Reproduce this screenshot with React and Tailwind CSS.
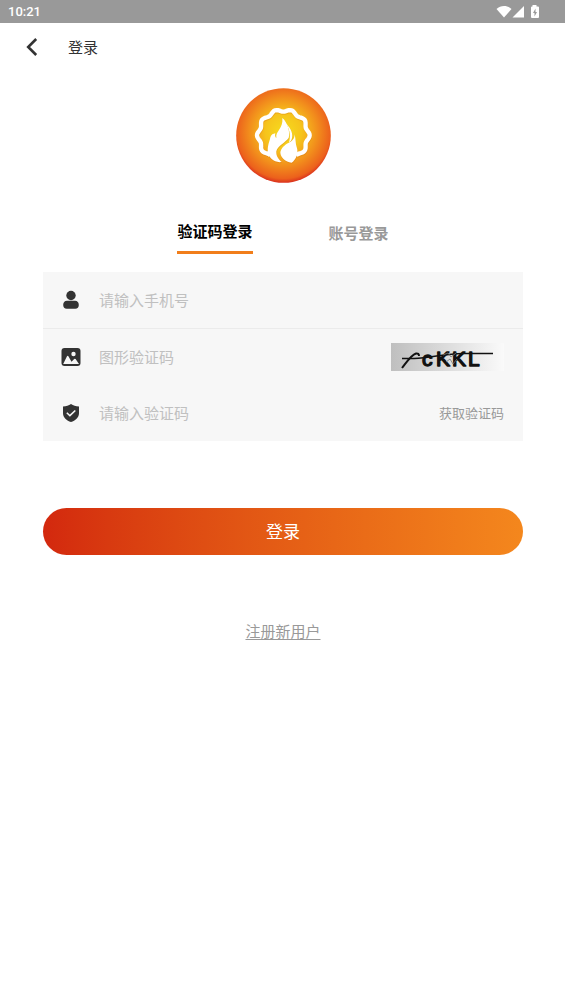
import React, { useState } from 'react';

const TABS = [
  { id: 'code', label: '验证码登录' },
  { id: 'account', label: '账号登录' }
];

// Ten-lobed ring, left open at the bottom where the flame sits
const ringPath = () => {
  const points = [];
  for (let deg = 123; deg <= 417; deg += 3) {
    const a = (deg * Math.PI) / 180;
    const r = 75 + 4 * Math.cos(10 * a);
    points.push(`${(157 + r * Math.cos(a)).toFixed(1)} ${(157 + r * Math.sin(a)).toFixed(1)}`);
  }
  return `M${points.join('L')}`;
};

const App = () => {
  const [tab, setTab] = useState('code');

  return (
    <div className="min-h-screen w-full bg-white font-['Noto_Sans','Noto_Sans_CJK_SC',sans-serif] text-[15px]">
      <StatusBar />

      {/* Header */}
      <header className="flex h-12 items-center pl-6">
        <button type="button" aria-label="返回" className="flex h-6 w-4 items-center justify-center">
          <svg viewBox="0 0 16 24" className="h-6 w-4" fill="none" stroke="#333" strokeWidth="2.6">
            <path d="M12.2 4 4.2 12l8 8" />
          </svg>
        </button>
        <h1 className="ml-7 leading-6 text-[#333]">登录</h1>
      </header>

      <main className="pl-[43px] pr-[42px] pt-[17px]">
        <Logo />

        {/* Login mode */}
        <div role="tablist" className="mt-9 flex justify-center gap-[76px]">
          {TABS.map((item) => (
            <button
              key={item.id}
              type="button"
              role="tab"
              aria-selected={tab === item.id}
              onClick={() => setTab(item.id)}
              className={
                tab === item.id
                  ? 'h-[35px] border-b-[3px] border-[#f17e1b] pb-2 font-bold leading-6 text-black'
                  : 'h-7 font-bold leading-6 text-[#999]'
              }
            >
              {item.label}
            </button>
          ))}
        </div>

        <form onSubmit={(e) => e.preventDefault()}>
          <div className="mt-[18px] bg-[#f7f7f7] pl-[18px] pr-[19px]">
            <Field id="phone" type="tel" placeholder="请输入手机号" icon={<UserIcon />} />
            <div className="-ml-[18px] -mr-[19px] h-px bg-[#ebebeb]" />
            <Field id="captcha" placeholder="图形验证码" icon={<ImageIcon />}>
              <button type="button" aria-label="刷新图形验证码">
                <Captcha />
              </button>
            </Field>
            <Field id="sms" placeholder="请输入验证码" icon={<ShieldIcon />}>
              <button type="button" className="text-[13px] leading-6 text-[#999]">获取验证码</button>
            </Field>
          </div>

          <button
            type="submit"
            className="mt-[67px] h-[47px] w-full rounded-full bg-linear-to-r from-[#d3280e] to-[#f4871d] text-[17px] text-white"
          >
            登录
          </button>
        </form>

        <div className="mt-16 text-center">
          <a href="#register" className="leading-6 text-[#999] underline underline-offset-2">注册新用户</a>
        </div>
      </main>
    </div>
  );
};

const StatusBar = () => (
  <div className="flex h-[23px] items-center justify-between bg-[#999] pl-2 pr-[25px] font-['Roboto'] text-[13px] text-white">
    <span className="font-medium">10:21</span>
    <svg viewBox="0 0 44 14" className="h-[14px] w-11" fill="#fff">
      <path d="M.5 4C4.600 0 11.400 0 15.500 4L8 12.500Z" />
      <path d="M28 1v11.500H16.500Z" />
      <path fillRule="evenodd" d="M36.500 0h4v1.500h1.500q1 0 1 1V12q0 1-1 1h-6q-1 0-1-1V2.500q0-1 1-1h.5ZM39.500 3.500 37 8h1.500V11.500L41 7h-1.500Z" />
    </svg>
  </div>
);

const Logo = () => (
  <svg viewBox="15 15 285 285" className="mx-auto size-[95px]" role="img" aria-label="logo">
    <defs>
      <radialGradient id="sun" cx="50%" cy="46%" r="55%">
        <stop offset="0" stopColor="#f6dc1e" />
        <stop offset=".35" stopColor="#f6c41c" />
        <stop offset=".65" stopColor="#f28f1c" />
        <stop offset=".9" stopColor="#ec611c" />
        <stop offset="1" stopColor="#d6261e" />
      </radialGradient>
    </defs>
    <circle cx="157.500" cy="157.500" r="142" fill="url(#sun)" />
    <g transform="translate(1 3)" fill="#c9660c" stroke="#c9660c" opacity=".25">
      <path d={ringPath()} fill="none" strokeWidth="13" />
      <Flame />
    </g>
    <path d={ringPath()} fill="none" stroke="#fff" strokeWidth="13" />
    <g fill="#fff">
      <Flame />
    </g>
  </svg>
);

const Flame = () => (
  <g strokeWidth="0">
    <path d="M154 105C170 118 178 148 173 165C164 178 140 188 136 205C135 219 142 229 152 237C130 240 113 225 111 208C108 190 116 176 118 163C121 155 126 152 133 151C131 160 134 164 136 165C133 143 157 139 154 105Z" />
    <path d="M166 122C180 137 188 153 182 169C180 174 177 177 174 179C179 162 178 144 166 122Z" />
    <path d="M191 154C195 170 193 181 197 192C204 211 195 230 182 239C163 236 149 224 148 209C149 197 160 186 172 180C184 175 191 167 191 154Z" />
  </g>
);

const Field = ({ id, icon, children, type = 'text', placeholder }) => (
  <div className="flex h-14 items-center">
    <label htmlFor={id} aria-label={placeholder} className="flex w-[38px] shrink-0">
      {icon}
    </label>
    <input
      id={id}
      type={type}
      placeholder={placeholder}
      className="h-full min-w-0 flex-1 bg-transparent text-[#333] outline-none placeholder:text-[#c0c0c0]"
    />
    {children}
  </div>
);

const UserIcon = () => (
  <svg viewBox="0 0 20 20" className="size-5" fill="#333">
    <circle cx="10" cy="5.500" r="4.700" />
    <path d="M6 10.800h8c2.500 0 3.800 2 3.800 4.200 0 2.200-1.300 3.700-3.500 3.700H5.700c-2.200 0-3.500-1.500-3.500-3.700C2.200 12.800 3.500 10.800 6 10.800Z" />
  </svg>
);

const ImageIcon = () => (
  <svg viewBox="0 0 20 20" className="size-5">
    <rect x=".5" y="1" width="19" height="18" rx="3" fill="#333" />
    <path d="M2.200 17 6 9.300q.7-1 1.400 0l3.100 5.400 2.700-2.600q.7-.6 1.400 0l3.400 4.900Z" fill="#f7f7f7" />
    <circle cx="12.500" cy="7" r="2.200" fill="#f7f7f7" />
  </svg>
);

const ShieldIcon = () => (
  <svg viewBox="0 0 20 20" className="size-5">
    <path d="M10 1c2.300 1.600 4.700 2.300 8 2.400v6.800c0 4.500-3.700 7.300-8 8.800-4.300-1.500-8-4.300-8-8.800V3.400C5.300 3.300 7.700 2.600 10 1Z" fill="#333" />
    <path d="m5.800 9.700 3.100 3 5.400-5.200" fill="none" stroke="#f7f7f7" strokeWidth="1.600" />
  </svg>
);

const Captcha = () => (
  <svg viewBox="0 0 113 28" className="h-7 w-[113px]">
    <defs>
      <linearGradient id="paper">
        <stop offset="0" stopColor="#bfbfbf" />
        <stop offset="1" stopColor="#fafafa" />
      </linearGradient>
    </defs>
    <rect width="113" height="28" fill="url(#paper)" />
    <g fill="none" stroke="#111" strokeWidth="2">
      <path d="M11 25C15 20 20 12 25 10.500Q28 10 28 13" />
      <path d="M11 15.500H23C40 15 54 10.500 72 10.500H102" strokeWidth="1.600" />
    </g>
    <text y="23" fill="#111" stroke="#111" strokeWidth="1.400" strokeLinejoin="round" fontFamily="Liberation Sans, sans-serif" fontSize="21">
      <tspan x="31">c</tspan>
      <tspan x="45">K</tspan>
      <tspan x="61">K</tspan>
      <tspan x="77">L</tspan>
    </text>
    <g fill="none" stroke="#777" strokeWidth=".8">
      <path d="m52 12 5-2 3 4 5-4M55 19l4-3 3 5 4-5" />
    </g>
  </svg>
);

export default App;
